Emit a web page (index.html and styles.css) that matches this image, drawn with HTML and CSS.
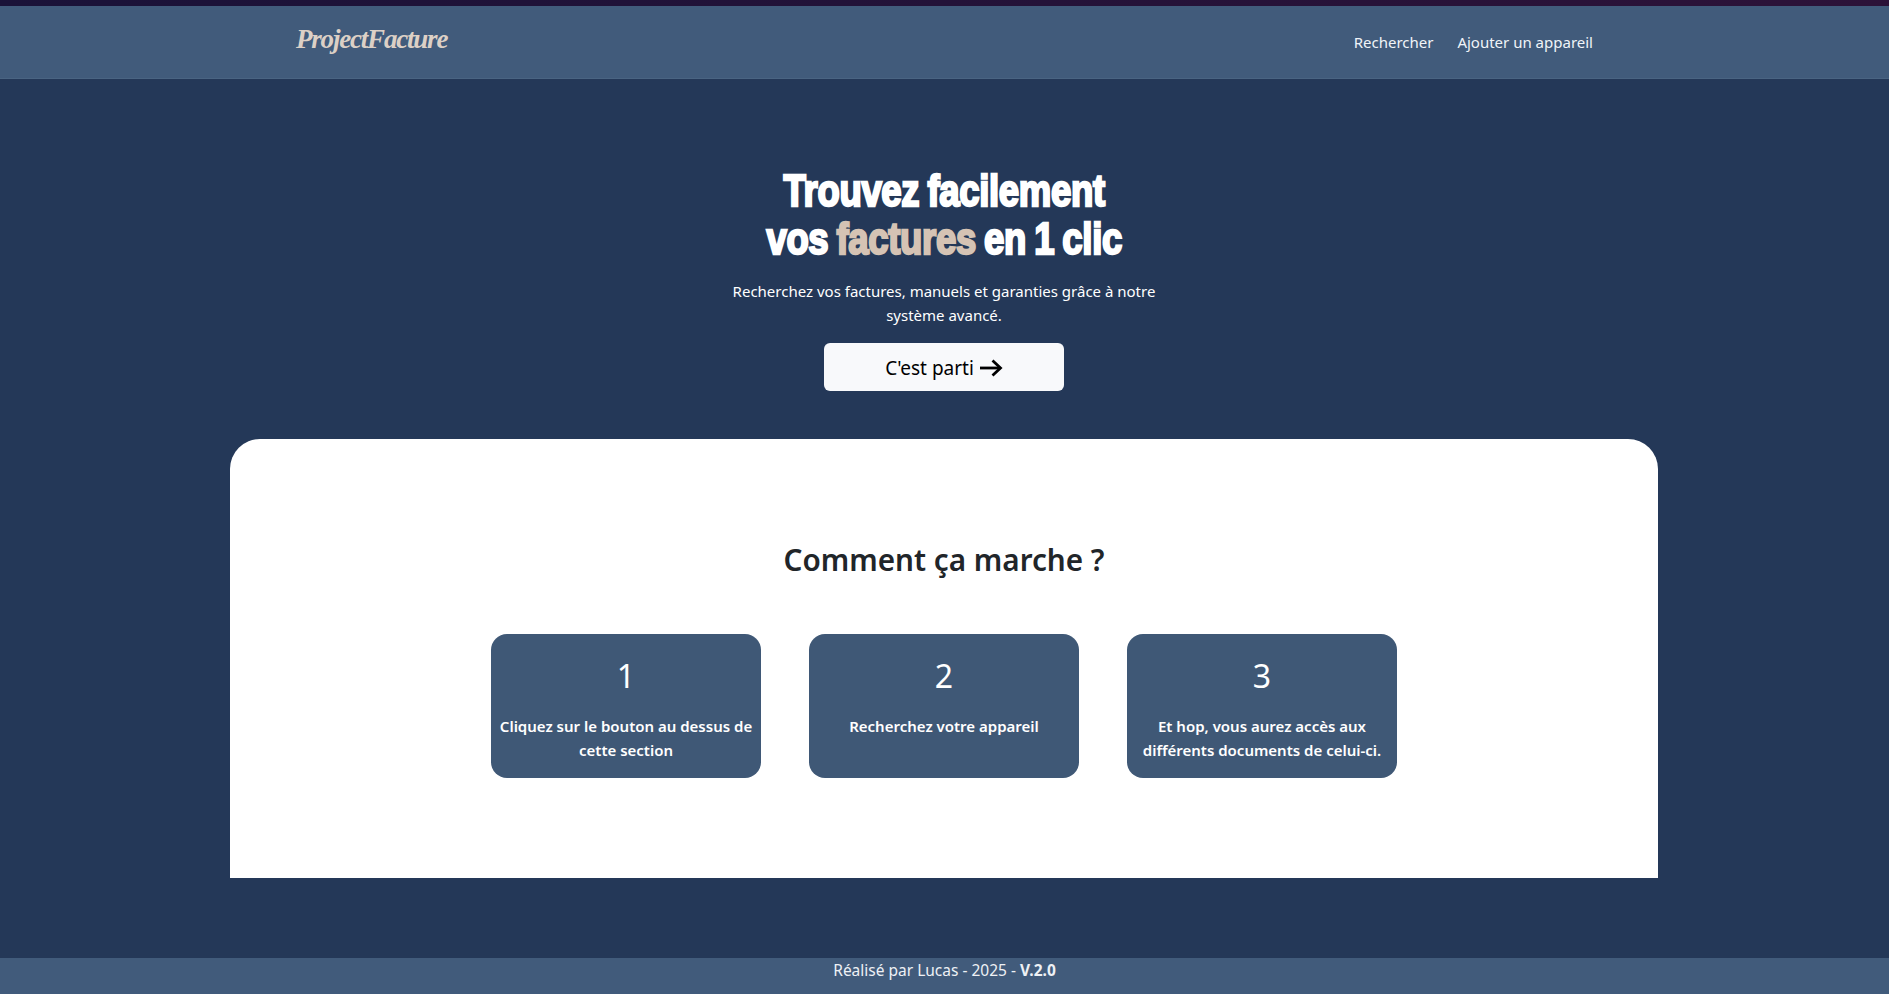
FILE: index.html
```html
<!DOCTYPE html>
<html lang="fr">
<head>
<meta charset="UTF-8">
<meta name="viewport" content="width=device-width, initial-scale=1.0">
<title>ProjectFacture</title>
<link rel="stylesheet" href="styles.css">
</head>
<body>

<div class="top-strip"></div>

<nav class="navbar">
  <a class="logo" href="#">ProjectFacture</a>
  <div class="nav-links">
    <a href="#">Rechercher</a>
    <a href="#">Ajouter un appareil</a>
  </div>
</nav>

<header class="hero">
  <h1>Trouvez facilement<br>vos <span class="accent">factures</span> en 1 clic</h1>
  <p>Recherchez vos factures, manuels et garanties grâce à notre système avancé.</p>
  <a class="btn-start" href="#">C'est parti
    <svg class="arrow" viewBox="0 0 24 18" width="24" height="18" fill="none" stroke="currentColor" stroke-width="2.8">
      <path d="M1 9H21"/>
      <path d="M13.5 1.5L21.5 9L13.5 16.5"/>
    </svg>
  </a>
</header>

<main class="panel">
  <h2>Comment ça marche ?</h2>
  <div class="steps">
    <div class="step">
      <div class="step-num">1</div>
      <p>Cliquez sur le bouton au dessus de cette section</p>
    </div>
    <div class="step">
      <div class="step-num">2</div>
      <p>Recherchez votre appareil</p>
    </div>
    <div class="step">
      <div class="step-num">3</div>
      <p>Et hop, vous aurez accès aux différents documents de celui-ci.</p>
    </div>
  </div>
</main>

<footer>Réalisé par Lucas - 2025 - <strong>V.2.0</strong></footer>

</body>
</html>
```
FILE: styles.css
```css
html, body {
  height: 100%;
}

body {
  margin: 0;
  display: flex;
  flex-direction: column;
  min-height: 994px;
  box-sizing: border-box;
  background: #243858;
  color: #fff;
  font-family: "Noto Sans", "Open Sans", sans-serif;
  font-size: 16px;
  line-height: 24px;
}

a {
  color: inherit;
  text-decoration: none;
}

.top-strip {
  height: 6px;
  background: linear-gradient(90deg, #1a1238, #2c1238);
}

.navbar {
  height: 73px;
  box-sizing: border-box;
  padding: 0 296px;
  display: flex;
  justify-content: space-between;
  align-items: center;
  background: #415b7b;
  border-bottom: 1px solid #4a6482;
}

.logo {
  font-family: "Liberation Serif", serif;
  font-style: italic;
  font-weight: 700;
  font-size: 27px;
  letter-spacing: -1.2px;
  color: #dcd0c6;
  margin-top: -6px;
}

.nav-links {
  display: flex;
  gap: 24px;
  font-size: 15px;
  color: #f0f4f8;
}

.hero {
  display: flex;
  flex-direction: column;
  align-items: center;
  text-align: center;
  padding: 88px 1px 0 0;
}

.hero h1 {
  margin: 0;
  font-family: "Liberation Sans", sans-serif;
  font-weight: 700;
  font-size: 44px;
  line-height: 48px;
  letter-spacing: -0.4px;
  word-spacing: -2px;
  -webkit-text-stroke: 2.4px currentColor;
  transform: scaleX(0.83);
}

.accent {
  color: #d5c3b4;
}

.hero p {
  width: 440px;
  margin: 16px 0 0;
  font-size: 15px;
}

.btn-start {
  width: 240px;
  height: 48px;
  margin-top: 16px;
  padding-top: 1px;
  box-sizing: border-box;
  display: flex;
  justify-content: center;
  align-items: center;
  gap: 5px;
  background: #f8f9fb;
  color: #000;
  border-radius: 6px;
  font-size: 19px;
}

.arrow {
  margin-top: 1px;
}

.panel {
  width: 1428px;
  height: 439px;
  margin: 48px 0 0 230px;
  box-sizing: border-box;
  padding-top: 99px;
  background: #fff;
  color: #212529;
  border-radius: 30px 30px 0 0;
}

.panel h2 {
  margin: 0;
  text-align: center;
  font-size: 29.7px;
  line-height: 44px;
  font-weight: 600;
}

.steps {
  display: flex;
  justify-content: center;
  gap: 48px;
  margin-top: 52px;
}

.step {
  width: 270px;
  height: 144px;
  box-sizing: border-box;
  padding: 20px 8px 0;
  background: #3f5876;
  color: #fff;
  border-radius: 16px;
  text-align: center;
}

.step-num {
  font-size: 32px;
  line-height: 44px;
}

.step p {
  margin: 16px 0 0;
  font-size: 15px;
  font-weight: 600;
}

footer {
  margin-top: auto;
  height: 36px;
  background: #415b7b;
  color: #eef1f5;
  text-align: center;
  font-size: 15.5px;
}
```
